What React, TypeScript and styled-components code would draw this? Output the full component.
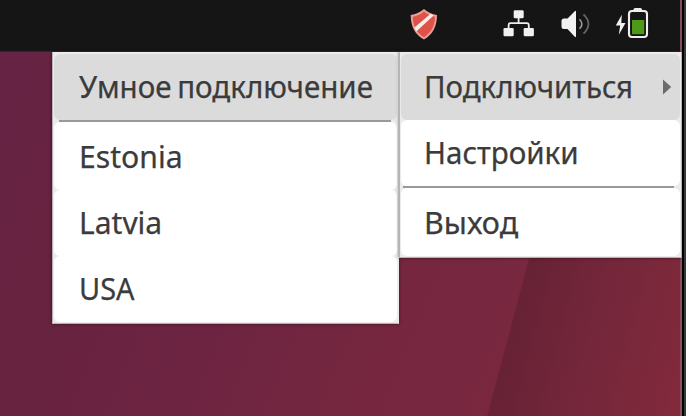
import React from "react";
import styled, { createGlobalStyle } from "styled-components";

const GlobalStyle = createGlobalStyle`
  * { box-sizing: border-box; }
  body { margin: 0; background: #000; overflow: hidden; }
`;

const Screen = styled.div`
  width: 686px;
  height: 416px;
  display: flex;
  overflow: hidden;
  font-family: "Noto Sans", "Open Sans", sans-serif;
`;

const Desktop = styled.div`
  width: 682px;
  height: 416px;
  display: flex;
  flex-direction: column;
  border-right: 2px solid rgba(150, 150, 150, 0.38);
  background: linear-gradient(
      104.9deg,
      transparent 577px,
      #672235 578.5px,
      #73263a 650px,
      #7b283b 710px,
      #84293b 766px
    ),
    linear-gradient(112deg, #672345 0, #672340 140px, #6c2441 300px, #76273f 480px, #7a283f 700px);
  background-origin: border-box;
`;

const Bezel = styled.div`
  width: 4px;
  border-left: 2px solid #000;
  background: #383838;
`;

const TopBar = styled.header`
  height: 52px;
  flex: none;
  display: flex;
  background: #151515;
  border-bottom: 1px solid #2b2b2b;
`;

const Tray = styled.div`
  display: flex;
  align-items: flex-start;
  padding-left: 409px;
`;

const TrayIcon = styled.svg<{ $gap?: number }>`
  display: block;
  flex: none;
  margin-left: ${(p) => p.$gap ?? 0}px;
`;

const Menus = styled.div`
  display: flex;
  align-items: flex-start;
  margin-right: -2px;
  padding-left: 52px;
`;

const Menu = styled.div<{ $width: number; $indent: number; $joined?: boolean }>`
  --indent: ${(p) => p.$indent}px;
  width: ${(p) => p.$width}px;
  flex: none;
  padding: 2px 1px 1px;
  background: #ebebeb;
  border: solid #b4b4b4;
  border-width: 0 1px 1px;
  border-right-color: ${(p) => (p.$joined ? "#ebebeb" : "#b4b4b4")};
  box-shadow: 0 0 3px rgba(20, 0, 10, 0.6);
`;

const Item = styled.div<{ $active?: boolean; $height?: number }>`
  height: ${(p) => p.$height ?? 66}px;
  display: flex;
  align-items: center;
  justify-content: space-between;
  padding: 0 8px 0 var(--indent);
  border-radius: 6px;
  background: ${(p) => (p.$active ? "#dbdbdb" : "#fff")};
`;

const Label = styled.span<{ $stretch?: number; $drop?: number }>`
  font-size: 30px;
  line-height: 40px;
  color: #3b3b3b;
  -webkit-text-stroke: 0.25px #3b3b3b;
  white-space: nowrap;
  word-spacing: -2px;
  padding-top: ${(p) => p.$drop ?? 0}px;
  transform: scaleX(${(p) => p.$stretch ?? 1});
  transform-origin: left center;
`;

const Separator = styled.hr<{ $inset?: number }>`
  height: 2px;
  margin: 0 6px 0 ${(p) => p.$inset ?? 2}px;
  border: 0;
  background: #999;
`;

export default function App() {
  return (
    <>
      <GlobalStyle />
      <Screen>
        <Desktop>
          <TopBar>
            <Tray>
              <TrayIcon width="30" height="50" viewBox="409 0 30 50">
                <path d="M424 9 C420 12.5 415.5 14.4 410.7 15 C410.8 26 414.5 34.5 424 39.5 C433 34.5 437 26 437 15 C432 14.4 428 12.5 424 9Z" fill="#eb9d95" />
                <path d="M424 11.5 C420.5 14.5 417 16 412.8 16.7 C413 26 416.5 32.5 424 37.2 C431.2 32.5 434.8 26 435 16.7 C431 16 427.5 14.5 424 11.5Z" fill="#df5247" />
                <path d="M414.4 27.6 L430.7 13.8 L433.6 15.4 L416.3 31.6Z" fill="#f4efed" />
              </TrayIcon>
              <TrayIcon $gap={63} width="34" height="50" viewBox="502 0 34 50">
                <path d="M518.6 17V23.2M508.6 29V25.2Q508.6 23.2 510.6 23.2H526.8Q528.8 23.2 528.8 25.2V29" fill="none" stroke="#eee" strokeWidth="1.8" />
                <rect x="513.7" y="10.2" width="10" height="8" rx="1.3" fill="#f0f0f0" />
                <rect x="503.5" y="28" width="10.2" height="8.2" rx="1.3" fill="#f0f0f0" />
                <rect x="523.7" y="28" width="10.2" height="8.2" rx="1.3" fill="#f0f0f0" />
              </TrayIcon>
              <TrayIcon $gap={24} width="34" height="50" viewBox="560 0 34 50">
                <path d="M564 18.5Q561.5 18.5 561.5 21V26.5Q561.5 29 564 29H567.5L574.5 36.5Q576 38 576 36V12Q576 10 574.5 11.5L567.5 18.5Z" fill="#f2f2f2" />
                <path d="M579.5 19.2Q584.3 24 579.5 28.8" fill="none" stroke="#999" strokeWidth="1.6" />
                <path d="M583.5 14.3Q593.5 24 583.5 33.7" fill="none" stroke="#666" strokeWidth="1.8" />
              </TrayIcon>
              <TrayIcon $gap={20} width="36" height="50" viewBox="614 0 36 50">
                <path d="M621.8 14.7L615.8 25.4H620.2L618.8 34.8L625.5 23H621.3Z" fill="#f2f2f2" />
                <path d="M633.5 11V9.5Q633.5 8 635 8H640.5Q642 8 642 9.5V11Z" fill="#eee" />
                <rect x="629" y="11" width="18" height="26" rx="3" fill="none" stroke="#f0eef0" strokeWidth="2.1" />
                <rect x="632" y="20" width="12.2" height="14.2" fill="#4d9a18" />
              </TrayIcon>
            </Tray>
          </TopBar>
          <Menus>
            <Menu $width={347} $indent={25} $joined>
              <Item $active><Label $stretch={0.984}>Умное подключение</Label></Item>
              <Separator $inset={5} />
              <Item $height={68}><Label $drop={2} $stretch={1.005}>Estonia</Label></Item>
              <Item><Label>Latvia</Label></Item>
              <Item><Label $stretch={0.965}>USA</Label></Item>
            </Menu>
            <Menu $width={283} $indent={22.5}>
              <Item $active>
                <Label $stretch={0.98}>Подключиться</Label>
                <svg width="10" height="18" viewBox="0 0 10 18">
                  <path d="M1 1.5L9.2 9L1 16.5Z" fill="#6b6b6b" />
                </svg>
              </Item>
              <Item><Label $stretch={0.985}>Настройки</Label></Item>
              <Separator />
              <Item $height={68}><Label $drop={2} $stretch={1.015}>Выход</Label></Item>
            </Menu>
          </Menus>
        </Desktop>
        <Bezel />
      </Screen>
    </>
  );
}
